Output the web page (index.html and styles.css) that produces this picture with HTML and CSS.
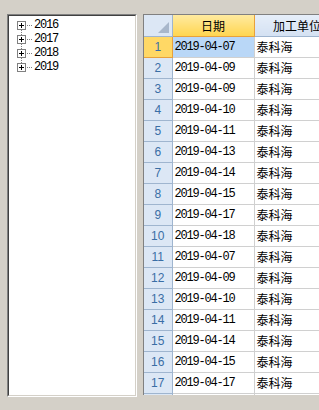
FILE: index.html
```html
<!DOCTYPE html>
<html>
<head>
<title>日期列表</title>
<link rel="stylesheet" href="styles.css">
</head>
<body>

<div class="window">
  <div class="tree-frame">
    <div class="tree">
      <div class="node">
        <span class="expander"><svg width="9" height="9" viewBox="0 0 9 9"><rect x="0.5" y="0.5" width="8" height="8" fill="#fff" stroke="#808080"/><path d="M2 4.5h5M4.5 2v5" stroke="#000"/></svg></span>
        <span class="dots"></span>
        <span class="label">2016</span>
      </div>
      <div class="node">
        <span class="expander"><svg width="9" height="9" viewBox="0 0 9 9"><rect x="0.5" y="0.5" width="8" height="8" fill="#fff" stroke="#808080"/><path d="M2 4.5h5M4.5 2v5" stroke="#000"/></svg></span>
        <span class="dots"></span>
        <span class="label">2017</span>
      </div>
      <div class="node">
        <span class="expander"><svg width="9" height="9" viewBox="0 0 9 9"><rect x="0.5" y="0.5" width="8" height="8" fill="#fff" stroke="#808080"/><path d="M2 4.5h5M4.5 2v5" stroke="#000"/></svg></span>
        <span class="dots"></span>
        <span class="label">2018</span>
      </div>
      <div class="node last">
        <span class="expander"><svg width="9" height="9" viewBox="0 0 9 9"><rect x="0.5" y="0.5" width="8" height="8" fill="#fff" stroke="#808080"/><path d="M2 4.5h5M4.5 2v5" stroke="#000"/></svg></span>
        <span class="dots"></span>
        <span class="label">2019</span>
      </div>
    </div>
  </div>

  <div class="grid">
    <table>
      <colgroup>
        <col class="col-num">
        <col class="col-date">
        <col class="col-unit">
      </colgroup>
      <tr class="head">
        <th class="corner"><div class="corner-mark"></div></th>
        <th class="active">日期</th>
        <th>加工单位</th>
      </tr>
      <tr><td class="num active">1</td><td class="date selected">2019-04-07</td><td class="unit">泰科海</td></tr>
      <tr><td class="num">2</td><td class="date">2019-04-09</td><td class="unit">泰科海</td></tr>
      <tr><td class="num">3</td><td class="date">2019-04-09</td><td class="unit">泰科海</td></tr>
      <tr><td class="num">4</td><td class="date">2019-04-10</td><td class="unit">泰科海</td></tr>
      <tr><td class="num">5</td><td class="date">2019-04-11</td><td class="unit">泰科海</td></tr>
      <tr><td class="num">6</td><td class="date">2019-04-13</td><td class="unit">泰科海</td></tr>
      <tr><td class="num">7</td><td class="date">2019-04-14</td><td class="unit">泰科海</td></tr>
      <tr><td class="num">8</td><td class="date">2019-04-15</td><td class="unit">泰科海</td></tr>
      <tr><td class="num">9</td><td class="date">2019-04-17</td><td class="unit">泰科海</td></tr>
      <tr><td class="num">10</td><td class="date">2019-04-18</td><td class="unit">泰科海</td></tr>
      <tr><td class="num">11</td><td class="date">2019-04-07</td><td class="unit">泰科海</td></tr>
      <tr><td class="num">12</td><td class="date">2019-04-09</td><td class="unit">泰科海</td></tr>
      <tr><td class="num">13</td><td class="date">2019-04-10</td><td class="unit">泰科海</td></tr>
      <tr><td class="num">14</td><td class="date">2019-04-11</td><td class="unit">泰科海</td></tr>
      <tr><td class="num">15</td><td class="date">2019-04-14</td><td class="unit">泰科海</td></tr>
      <tr><td class="num">16</td><td class="date">2019-04-15</td><td class="unit">泰科海</td></tr>
      <tr><td class="num">17</td><td class="date">2019-04-17</td><td class="unit">泰科海</td></tr>
      <tr><td class="num"></td><td class="date"></td><td class="unit"></td></tr>
    </table>
  </div>
</div>

</body>
</html>
```

FILE: styles.css
```css
body {
  margin: 0;
  width: 319px;
  height: 410px;
  overflow: hidden;
  background: #d4d0c8;
  font-family: "Liberation Sans", "Noto Sans CJK SC", sans-serif;
  font-size: 12px;
}

.window {
  display: flex;
  gap: 6px;
  padding: 14px 0 0 7px;
}

/* Tree panel: sunken 3D frame */
.tree-frame {
  flex: none;
  width: 130px;
  height: 383px;
  box-sizing: border-box;
  border: 1px solid;
  border-color: #808080 #fff #fff #808080;
}

.tree {
  height: 100%;
  box-sizing: border-box;
  border: 1px solid;
  border-color: #404040 #d4d0c8 #d4d0c8 #404040;
  background: #fff;
  padding: 2px 0 0 8px;
}

.node {
  position: relative;
  display: flex;
  align-items: center;
  height: 14px;
}

/* dotted line down to the next node */
.node::after {
  content: "";
  position: absolute;
  left: 4px;
  top: 12px;
  width: 1px;
  height: 6px;
  background: repeating-linear-gradient(to bottom, #808080 0 1px, transparent 1px 2px);
}

.node.last::after {
  display: none;
}

.expander {
  display: flex;
  width: 9px;
  height: 9px;
}

.dots {
  width: 5px;
  height: 1px;
  margin: 0 2px 0 1px;
  background: repeating-linear-gradient(to right, #808080 0 1px, transparent 1px 2px);
}

.label {
  font-family: "Liberation Mono", monospace;
  letter-spacing: -1.2px;
  color: #000;
}

/* Data grid */
.grid {
  flex: none;
  width: 200px;
  height: 381px;
  box-sizing: border-box;
  border-top: 1px solid #808080;
  border-left: 1px solid #808080;
  background: #fff;
  overflow: hidden;
}

table {
  border-collapse: collapse;
  table-layout: fixed;
  width: 196px;
}

.col-num { width: 28px; }
.col-date { width: 82px; }
.col-unit { width: 86px; }

tr {
  height: 21px;
}

th, td {
  padding: 0;
  border-right: 1px solid #d0d0d0;
  border-bottom: 1px solid #d0d0d0;
  white-space: nowrap;
  overflow: hidden;
}

th {
  font-family: "Noto Sans CJK SC", sans-serif;
  font-weight: normal;
  font-size: 12px;
  color: #000;
  background: linear-gradient(#e6eef9, #d4e1f2);
  border-color: #9fb5cf;
  text-align: center;
}

th.active {
  background: linear-gradient(#ffeaa0, #ffd550);
  border-color: #e8a13b;
}

th.corner {
  background: #dce7f5;
  vertical-align: bottom;
}

.corner-mark {
  width: 0;
  height: 0;
  margin: 0 3px 3px auto;
  border-left: 11px solid transparent;
  border-bottom: 11px solid #a8b7cb;
}

td.num {
  background: #dce7f5;
  border-color: #9fb5cf;
  color: #3a6ea5;
  text-align: center;
}

td.num.active {
  background: #ffd865;
  border-color: #e8a13b;
}

td.date {
  font-family: "Liberation Mono", monospace;
  letter-spacing: -1.2px;
  padding-left: 2px;
}

td.selected {
  background: #b9d7f7;
}

td.unit {
  font-family: "Noto Sans CJK SC", sans-serif;
  padding-left: 2px;
}
```
